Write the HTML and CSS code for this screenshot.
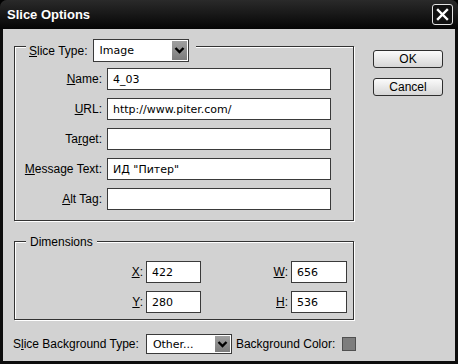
FILE: index.html
```html
<!DOCTYPE html>
<html lang="en">

<head>
    <meta charset="UTF-8">
    <title>Slice Options</title>
    <link rel="stylesheet" href="styles.css">
</head>

<body>
    <div class="window">
        <div class="titlebar">
            <span class="title">Slice Options</span>
            <div class="close">
                <svg width="13" height="13" viewBox="0 0 13 13">
                    <path d="M2 2 L11 11 M11 2 L2 11" stroke="#fff" stroke-width="2.4" stroke-linecap="square" />
                </svg>
            </div>
        </div>
        <div class="client">
            <div class="main">
                <div class="groups">
                    <div class="group slice-group">
                        <div class="legend">
                            <span><u>S</u>lice Type:</span>
                            <div class="select select-type">
                                <span>Image</span>
                                <span class="arrow">
                                    <svg width="11" height="9" viewBox="0 0 11 9">
                                        <path d="M1.5 2 L5.5 6 L9.5 2" fill="none" stroke="#000" stroke-width="2.4" />
                                    </svg>
                                </span>
                            </div>
                        </div>
                        <div class="fields">
                            <div class="row"><label><u>N</u>ame:</label><input type="text" value="4_03"></div>
                            <div class="row"><label><u>U</u>RL:</label><input type="text" value="http://www.piter.com/"></div>
                            <div class="row"><label>Ta<u>r</u>get:</label><input type="text" value=""></div>
                            <div class="row"><label><u>M</u>essage Text:</label><input type="text" value="ИД &quot;Питер&quot;"></div>
                            <div class="row"><label><u>A</u>lt Tag:</label><input type="text" value=""></div>
                        </div>
                    </div>
                    <div class="group dim-group">
                        <div class="legend"><span>Dimensions</span></div>
                        <div class="dims">
                            <label><u>X</u>:</label><input type="text" value="422">
                            <label><u>W</u>:</label><input type="text" value="656">
                            <label><u>Y</u>:</label><input type="text" value="280">
                            <label><u>H</u>:</label><input type="text" value="536">
                        </div>
                    </div>
                </div>
                <div class="buttons">
                    <button>OK</button>
                    <button>Cancel</button>
                </div>
            </div>
            <div class="bottom">
                <span>S<u>l</u>ice Background Type:</span>
                <div class="select select-bg">
                    <span>Other...</span>
                    <span class="arrow">
                        <svg width="11" height="9" viewBox="0 0 11 9">
                            <path d="M1.5 2 L5.5 6 L9.5 2" fill="none" stroke="#000" stroke-width="2.4" />
                        </svg>
                    </span>
                </div>
                <span class="bg-label">Background Color:</span>
                <div class="swatch"></div>
            </div>
        </div>
    </div>
</body>

</html>
```

FILE: styles.css
```css
* {
    box-sizing: border-box;
}

body {
    margin: 0;
    background: #000;
    font-family: "Liberation Sans", Arial, sans-serif;
    font-size: 12px;
    color: #000;
}

.window {
    width: 458px;
    height: 364px;
    background: #0d0d0d;
    border-radius: 7px 7px 0 0;
    display: flex;
    flex-direction: column;
    padding: 0 3px 3px;
}

.titlebar {
    height: 29px;
    margin: 0 -3px;
    padding: 0 5px 0 7px;
    display: flex;
    align-items: center;
    justify-content: space-between;
    background: linear-gradient(#2a2a2a, #050505);
    border-radius: 7px 7px 0 0;
}

.title {
    color: #fff;
    font-weight: bold;
    font-size: 13px;
}

.close {
    width: 21px;
    height: 21px;
    border: 1.5px solid #e4e4e4;
    border-radius: 3px;
    display: flex;
    align-items: center;
    justify-content: center;
    background: #111;
}

.client {
    flex: 1;
    background: #d2d2d2;
    padding: 17px 0 0 10px;
}

.main {
    display: flex;
}

.groups {
    width: 341px;
}

.group {
    width: 340px;
    margin-left: 1px;
    border: 1px solid #333;
    box-shadow: inset 1px 1px 0 #fff, 1px 1px 0 #fff;
}

.legend {
    display: flex;
    align-items: center;
    width: max-content;
    margin: -8px 0 0 11px;
    background: #d2d2d2;
}

.slice-group {
    padding-bottom: 10px;
}

.slice-group .legend {
    gap: 5px;
    padding: 0 7px 0 3px;
}

.dim-group {
    margin-top: 20px;
    padding-bottom: 6px;
}

.dim-group .legend {
    height: 15px;
    padding: 0 4px;
}

.fields {
    margin-top: 6px;
    display: flex;
    flex-direction: column;
    gap: 8px;
}

.row {
    display: flex;
    align-items: center;
    gap: 5px;
}

.row label {
    width: 87px;
    text-align: right;
}

input {
    height: 22px;
    border: 1px solid #3a3a3a;
    background: #fff;
    padding: 0 5px;
    font-family: "DejaVu Sans", sans-serif;
    font-size: 11px;
    color: #000;
    outline: none;
}

.row input {
    width: 224px;
}

.dims {
    display: grid;
    grid-template-columns: 128px 55px 84px 56px;
    column-gap: 3px;
    row-gap: 8px;
    align-items: center;
    margin-top: 12px;
}

.dims label {
    text-align: right;
}

.dims input {
    width: 100%;
}

.buttons {
    margin: 4px 0 0 19px;
    display: flex;
    flex-direction: column;
    gap: 10px;
}

button {
    width: 70px;
    height: 18px;
    padding: 0;
    border: 1.5px solid #2e2e2e;
    border-radius: 3px;
    background: linear-gradient(#fbfbfb, #d6d6d6);
    font-family: "Liberation Sans", Arial, sans-serif;
    font-size: 12px;
    color: #000;
}

.select {
    display: flex;
    align-items: center;
    justify-content: space-between;
    background: #fff;
    border: 1px solid #3a3a3a;
    padding: 1px 1px 1px 6px;
    font-family: "DejaVu Sans", sans-serif;
    font-size: 11px;
}

.select-type {
    width: 96px;
    height: 23px;
}

.select-bg {
    width: 86px;
    height: 20px;
    margin-left: 7px;
}

.arrow {
    width: 15px;
    height: 100%;
    display: flex;
    align-items: center;
    justify-content: center;
    background: linear-gradient(#a0a0a0, #7c7c7c);
}

.bottom {
    display: flex;
    align-items: center;
    margin-top: 14px;
}

.bg-label {
    margin-left: 4px;
}

.swatch {
    width: 14px;
    height: 14px;
    margin-left: 7px;
    background: #7d7d7d;
    border: 1px solid #505050;
}
```
